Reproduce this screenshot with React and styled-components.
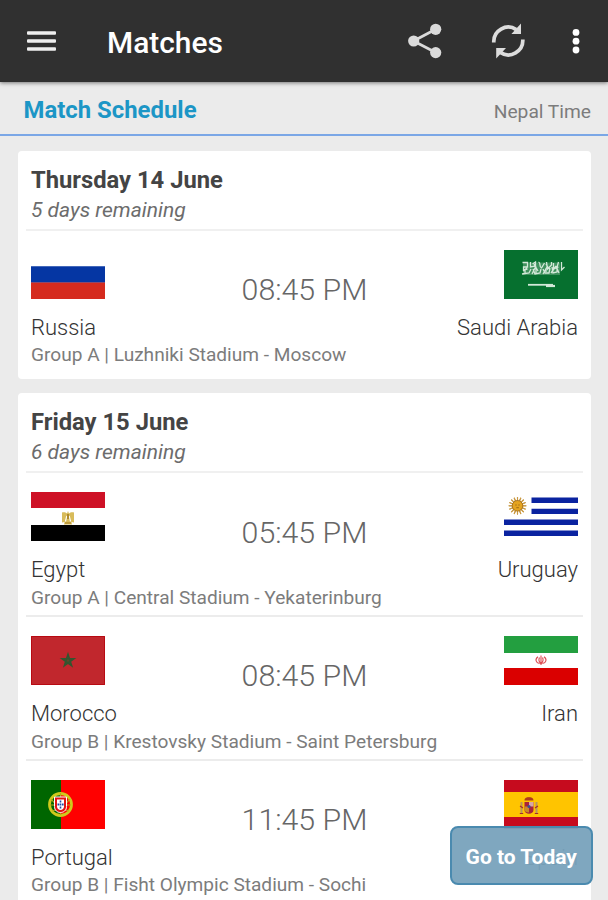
import React from "react";
import styled, { createGlobalStyle } from "styled-components";

const GlobalStyle = createGlobalStyle`
  * { box-sizing: border-box; }
  body {
    margin: 0;
    background: #ebebeb;
    font-family: Roboto, "Liberation Sans", sans-serif;
  }
`;

const Screen = styled.div`
  position: relative;
  width: 608px;
  height: 900px;
  overflow: hidden;
  background: #ebebeb;
`;

const AppBar = styled.header`
  position: relative;
  display: flex;
  align-items: center;
  height: 82px;
  padding: 0 28px 0 27px;
  background: #303030;
  box-shadow: 0 1px 4px rgba(0, 0, 0, 0.5);
`;

const AppTitle = styled.h1`
  flex: 1;
  margin: 3px 0 0 50px;
  font-size: 29.9px;
  line-height: 36px;
  font-weight: 500;
  color: #fff;
`;

const IconButton = styled.button`
  display: flex;
  margin: 0 0 0 ${(p) => p.$gap || 0}px;
  padding: 0;
  border: 0;
  background: none;
`;

const SubHeader = styled.div`
  display: flex;
  justify-content: space-between;
  height: 54px;
  padding: 13px 17px 0 23.5px;
  border-bottom: 2px solid #7ba7e6;
`;

const Section = styled.h2`
  margin: 0;
  font-size: 23.9px;
  line-height: 30px;
  font-weight: 700;
  color: #1c96c6;
`;

const Zone = styled.span`
  font-size: 19.2px;
  line-height: 34px;
  color: #7c7c7c;
`;

const Schedule = styled.main`
  display: flex;
  flex-direction: column;
  gap: 14.8px;
  padding: 15px 17px 0 18px;
`;

const Card = styled.section`
  flex-shrink: 0;
  padding-bottom: 4px;
  border-radius: 4px;
  background: #fff;
`;

const CardHeader = styled.div`
  height: 80px;
  margin: 0 8px;
  padding: 13px 5px 0;
  border-bottom: 2px solid #f0f0f0;
`;

const DateTitle = styled.h3`
  margin: 0;
  font-size: 23.75px;
  line-height: 32px;
  font-weight: 700;
  color: #444;
`;

const Remaining = styled.p`
  margin: 0;
  font-size: 21px;
  line-height: 28px;
  font-style: italic;
  color: #6c6c6c;
`;

const Match = styled.article`
  height: 143.7px;
  margin: 0 8px;
  padding: 19px 5px 0;
  border-bottom: 2px solid #ececec;
  &:last-child { border-bottom-color: transparent; }
`;

const Teams = styled.div`
  display: grid;
  grid-template-columns: 1fr auto 1fr;
`;

const Team = styled.div`
  display: flex;
  flex-direction: column;
  align-items: ${(p) => (p.$away ? "flex-end" : "flex-start")};
`;

const TeamName = styled.span`
  margin-top: 13px;
  font-size: 22px;
  line-height: 31.4px;
  font-weight: 350;
  color: #333;
`;

const Kickoff = styled.time`
  padding-top: 22.2px;
  font-size: 30.3px;
  line-height: 36px;
  font-weight: 350;
  color: #666;
`;

const Venue = styled.p`
  margin: 0;
  font-size: 19.1px;
  line-height: 24px;
  white-space: nowrap;
  color: #7c7c7c;
`;

const FlagSvg = styled.svg`
  display: block;
  width: 74px;
  height: 49px;
`;

const TodayButton = styled.button`
  position: absolute;
  left: 450px;
  top: 826px;
  width: 142.5px;
  height: 59px;
  padding: 2px 0 0;
  border: 2px solid #4a8aaf;
  border-radius: 8px;
  background: rgba(120, 162, 188, 0.95);
  font-family: inherit;
  font-size: 21px;
  font-weight: 700;
  color: #fff;
`;

const MenuIcon = () => (
  <svg width="30" height="30" viewBox="0 0 30 30" fill="#efefef">
    <rect x="0" y="5.2" width="29" height="3.6" rx="1" />
    <rect x="0" y="13.2" width="29" height="3.6" rx="1" />
    <rect x="0" y="21.2" width="29" height="3.6" rx="1" />
  </svg>
);

const ShareIcon = () => (
  <svg width="34" height="36" viewBox="0 0 34 36" fill="#dadada">
    <path d="M27.7 6.3 5.5 18l22.2 11.6" fill="none" stroke="#dadada" strokeWidth="2.8" />
    <circle cx="27.7" cy="6.3" r="5.6" />
    <circle cx="5.7" cy="18" r="5.6" />
    <circle cx="27.7" cy="29.6" r="5.6" />
  </svg>
);

const RefreshIcon = () => (
  <svg width="34" height="38" viewBox="0 0 34 38">
    <g fill="none" stroke="#dcdcdc" strokeWidth="3.7">
      <path d="M2.8 20.5A14.5 14.5 0 0 1 25.3 7.6" />
      <path d="M31.8 17.5A14.5 14.5 0 0 1 9.3 30.4" />
    </g>
    <path d="M30 1.5V12H20.4ZM5.2 36.5V26h9.8Z" fill="#dcdcdc" />
  </svg>
);

const MoreIcon = () => (
  <svg width="8" height="28" viewBox="0 0 8 28" fill="#fff">
    <circle cx="4" cy="5.4" r="3.4" />
    <circle cx="4" cy="14.2" r="3.4" />
    <circle cx="4" cy="23" r="3.4" />
  </svg>
);

const SunRays = () => (
  <g stroke="#c99a45" strokeWidth="1.1">
    {Array.from({ length: 16 }, (_, i) => (
      <path key={i} d="M13.5 0V17.6" transform={`rotate(${i * 22.5} 13.5 8.8)`} />
    ))}
  </g>
);

const flags = {
  Russia: (
    <>
      <path fill="#fff" d="M0 0h74v16H0z" />
      <path fill="#0536a3" d="M0 16.3h74v16.4H0z" />
      <path fill="#d52b1e" d="M0 32.6h74V49H0z" />
    </>
  ),
  "Saudi Arabia": (
    <>
      <path fill="#06702f" d="M0 0h74v49H0z" />
      <path fill="#c4dfcb" opacity=".3" d="M19 12.5h37v12.500H19z" />
      <g fill="none" stroke="#d3e8d8" strokeWidth="1.300">
        <path d="M18.5 12.5h5v4.500h-4v3l4-1m3-7v5l5-1v-4l-3 2m6-2c3 1 0 5 3 6l3-5m2-1 1 7 4-4v-3m2 1v6l5-2m0-5-2 7m5-7v8l3-3M18 24l7-1 2-4m-6 1v4m8-5 2 5 5-1 1-4m-5-1v5m7-4 2 4h4l1-5m-4 0v4m6-5 1 6 4-1v-5M19 21l4-3m5 6 4-8m7 8 4-7m4 6 5-7M30 14l4 7m8-7 3 5m7-3 3 7" />
        <path d="M24 34.800h25" strokeWidth="1.800" />
        <path d="M42 36h9" strokeWidth="2.200" />
      </g>
    </>
  ),
  Egypt: (
    <>
      <path fill="#fff" d="M0 0h74v49H0z" />
      <path fill="#ce1126" d="M0 0h74v16H0z" />
      <path fill="#000" d="M0 33h74v16H0z" />
      <path fill="#d8bb5a" d="M31 20.500c2-.5 4 0 5 1l1-2.500 1 2.500c1-1 3-1.500 5-1v10l-2.500-.5.5 2.500h-8l.5-2.500-2.500.5z" />
      <path fill="#fff" d="M35.300 23.500l-1.500 6h1.300l1-5zM38.700 23.500l1.500 6h-1.300l-1-5z" />
      <path fill="#a67f20" d="M36.200 22h1.600v5h-1.600zM34 30.500h6v1h-6z" />
    </>
  ),
  Uruguay: (
    <>
      <path fill="#fff" d="M0 0h74v49H0z" />
      <path fill="#0a23a0" d="M27.500 5.600H74v5.400H27.500zM27.500 16.700H74v5.200H27.500zM0 27.500h74v5.400H0zM0 38.500h74V44H0z" />
      <g transform="translate(0 5)">
        <SunRays />
        <circle cx="13.500" cy="8.800" r="5.300" fill="#e5a41e" stroke="#a06c1c" strokeWidth=".9" />
        <path d="M11.300 8h1.400m1.600 0h1.400m-3.400 2.700h2.600" stroke="#8d5a12" strokeWidth=".8" />
      </g>
    </>
  ),
  Morocco: (
    <>
      <path fill="#c1272d" d="M0 0h74v49H0z" />
      <path fill="none" stroke="#b80a12" d="M.5.5h73v48H.5z" />
      <path
        fill="#5e4a2c"
        stroke="#33552f"
        strokeWidth="1.500"
        d="M37 18.300l3.700 11.400-9.700-7h12l-9.700 7z"
      />
    </>
  ),
  Iran: (
    <>
      <path fill="#fff" d="M0 0h74v49H0z" />
      <path fill="#239f40" d="M0 0h74v17H0z" />
      <path fill="#da0000" d="M0 32h74v17H0z" />
      <path
        fill="none"
        stroke="#dc4a50"
        strokeWidth="1.100"
        d="M37 19.500v9.500M34 20.800c-3.500 2.500-2 6 1.500 6.700M40 20.800c3.500 2.500 2 6-1.500 6.700M35.500 21.500c-1 2-.8 4 1.200 6M38.500 21.500c1 2 .8 4-1.200 6"
      />
    </>
  ),
  Portugal: (
    <>
      <path fill="#f00" d="M0 0h74v49H0z" />
      <path fill="#060" d="M0 0h30v49H0z" />
      <circle cx="29.500" cy="24.500" r="11" fill="none" stroke="#cfca1c" strokeWidth="2.800" />
      <path d="M20 19c6 8 12 11 18 12M39 19c-6 8-12 11-18 12M29.500 13v22M19 25h21" fill="none" stroke="#b9a81c" strokeWidth="1.200" />
      <path d="M23.500 17h12v9.500c0 8-12 8-12 0z" fill="#e01414" stroke="#fff" strokeWidth="1" />
      <path d="M26 19.500h7v7c0 4.500-7 4.500-7 0z" fill="#fff" />
      <path d="M28.700 20.500h1.600v2h-1.600zM26.500 23.500h1.700v2h-1.700zM28.700 23.500h1.600v2h-1.600zM30.900 23.500h1.700v2h-1.700zM28.700 26.500h1.600v2h-1.600z" fill="#204aa8" />
    </>
  ),
  Spain: (
    <>
      <path fill="#ffc400" d="M0 0h74v49H0z" />
      <path fill="#c60b1e" d="M0 0h74v12H0zM0 37h74v12H0z" />
      <path d="M17.500 22v11M32.500 22v11" stroke="#b9955c" strokeWidth="2" />
      <path d="M16 26l3 2M31 28l3-2M15.800 33.500h3.400M30.800 33.500h3.400" stroke="#a5292f" strokeWidth="1.200" />
      <path d="M20.500 20.500c0-3 2.500-3 4.500-3.500 2 .5 4.500.5 4.500 3.500z" fill="#b03a1e" />
      <path d="M20.500 22h9v8c0 5-9 5-9 0z" fill="#a8233a" />
      <path d="M25 22h4.500v4.500H25z" fill="#d9a6a6" />
      <path d="M20.500 26.500H25v6c-3 0-4.500-1-4.500-3z" fill="#c98a2a" />
      <circle cx="25" cy="26.500" r="1.600" fill="#3c4d94" />
    </>
  ),
};

const Flag = ({ country }) => (
  <FlagSvg viewBox="0 0 74 49" role="img" aria-label={country}>
    {flags[country]}
  </FlagSvg>
);

const days = [
  {
    date: "Thursday 14 June",
    remaining: "5 days remaining",
    matches: [
      { home: "Russia", away: "Saudi Arabia", time: "08:45 PM", venue: "Group A | Luzhniki Stadium - Moscow" },
    ],
  },
  {
    date: "Friday 15 June",
    remaining: "6 days remaining",
    matches: [
      { home: "Egypt", away: "Uruguay", time: "05:45 PM", venue: "Group A | Central Stadium - Yekaterinburg" },
      { home: "Morocco", away: "Iran", time: "08:45 PM", venue: "Group B | Krestovsky Stadium - Saint Petersburg" },
      { home: "Portugal", away: "Spain", time: "11:45 PM", venue: "Group B | Fisht Olympic Stadium - Sochi" },
    ],
  },
];

export default function App() {
  return (
    <Screen>
      <GlobalStyle />
      <AppBar>
        <IconButton aria-label="Menu"><MenuIcon /></IconButton>
        <AppTitle>Matches</AppTitle>
        <IconButton aria-label="Share"><ShareIcon /></IconButton>
        <IconButton aria-label="Refresh" $gap={49}><RefreshIcon /></IconButton>
        <IconButton aria-label="More" $gap={47}><MoreIcon /></IconButton>
      </AppBar>
      <SubHeader>
        <Section>Match Schedule</Section>
        <Zone>Nepal Time</Zone>
      </SubHeader>
      <Schedule>
        {days.map((day) => (
          <Card key={day.date}>
            <CardHeader>
              <DateTitle>{day.date}</DateTitle>
              <Remaining>{day.remaining}</Remaining>
            </CardHeader>
            {day.matches.map((m) => (
              <Match key={m.home}>
                <Teams>
                  <Team>
                    <Flag country={m.home} />
                    <TeamName>{m.home}</TeamName>
                  </Team>
                  <Kickoff>{m.time}</Kickoff>
                  <Team $away>
                    <Flag country={m.away} />
                    <TeamName>{m.away}</TeamName>
                  </Team>
                </Teams>
                <Venue>{m.venue}</Venue>
              </Match>
            ))}
          </Card>
        ))}
      </Schedule>
      <TodayButton>Go to Today</TodayButton>
    </Screen>
  );
}
